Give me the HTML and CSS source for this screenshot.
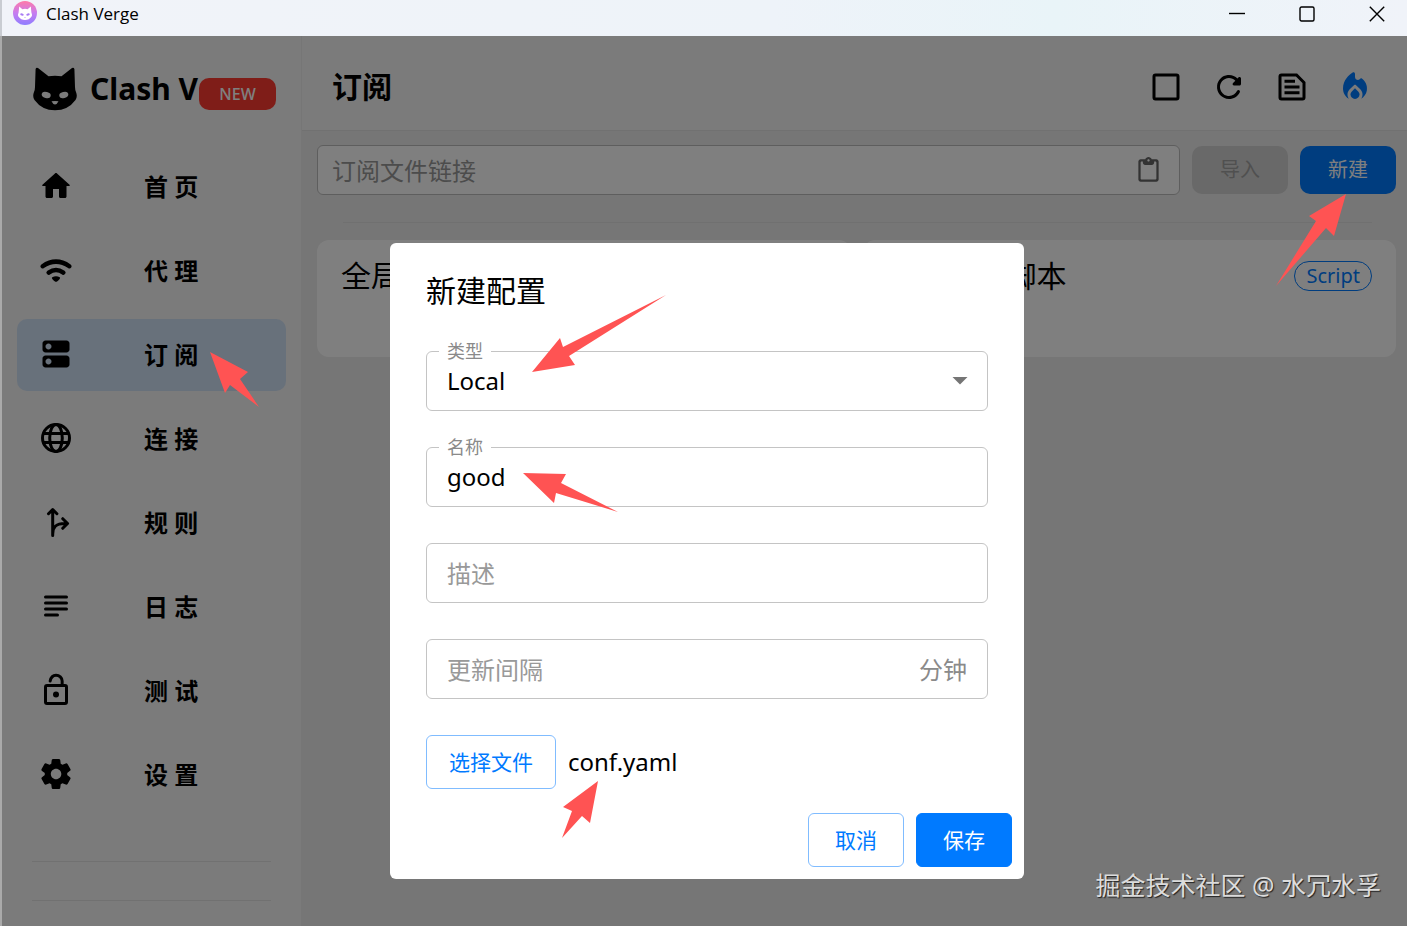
FILE: index.html
```html
<!DOCTYPE html>
<html lang="zh-CN">
<head>
<meta charset="utf-8">
<meta name="viewport" content="width=device-width, initial-scale=1">
<title>Clash Verge</title>
<link rel="stylesheet" href="styles.css">
</head>
<body>
<div class="window">
  <header class="titlebar">
    <svg class="titlebar-logo" viewBox="0 0 24 24" aria-hidden="true">
      <defs><linearGradient id="logo-bg" x1="0" y1="0" x2="0" y2="1"><stop offset="0" stop-color="#ff7aa8"/><stop offset=".5" stop-color="#c77df0"/><stop offset="1" stop-color="#8f7dff"/></linearGradient></defs>
      <circle cx="12" cy="12" r="12" fill="url(#logo-bg)"/>
      <path fill="#fff" d="M6.2 5.4 9.4 8.2Q12 7.4 14.6 8.2L17.8 5.4 18.4 11.5Q19.400 13.500 18.600 15.500Q16 19 12 19Q8 19 5.400 15.500Q4.600 13.500 5.600 11.500Z"/>
      <g fill="#a97cf4"><ellipse cx="9" cy="13.500" rx="1.800" ry="1.100" transform="rotate(18 9 13.500)"/><ellipse cx="15" cy="13.500" rx="1.800" ry="1.100" transform="rotate(-18 15 13.500)"/><path d="M11.200 16.200h1.600l-.8 1z"/></g>
    </svg>
    <span class="titlebar-name">Clash Verge</span>
    <div class="window-controls">
      <button type="button" aria-label="最小化"><svg viewBox="0 0 16 16"><path d="M0 7.500h16"/></svg></button>
      <button type="button" aria-label="最大化"><svg viewBox="0 0 16 16"><rect x="1" y="1" width="14" height="14" rx="1.500"/></svg></button>
      <button type="button" aria-label="关闭"><svg viewBox="0 0 16 16"><path d="M.8.800l14.400 14.400M15.200.800.800 15.200"/></svg></button>
    </div>
  </header>

  <div class="app">
    <aside class="sidebar">
      <div class="brand">
        <svg class="brand-cat" viewBox="0 0 44 44" aria-hidden="true">
          <path d="M2.600 2Q3.300 0 5 1L15.500 9.300Q22 8 28.500 9.300L39 1Q40.700 0 41.400 2L42 20Q42 22.500 43 25Q44.800 29.500 42.500 33Q35 43.300 22 43.300Q9 43.300 1.500 33Q-.8 29.500 1 25Q2 22.500 2 20Z"/>
          <g class="cat-cut"><ellipse cx="13.200" cy="28" rx="4.600" ry="3" transform="rotate(15 13.200 28)"/><ellipse cx="30.800" cy="28" rx="4.600" ry="3" transform="rotate(-15 30.800 28)"/><path d="M18.500 34.300Q22 33.500 25.500 34.300Q24 37.500 22 37.500Q20 37.500 18.500 34.300Z"/></g>
        </svg>
        <span class="brand-name">Clash V</span>
        <span class="brand-badge">NEW</span>
      </div>
      <nav class="menu">
        <a href="#home"><svg viewBox="0 0 24 24"><path d="M10 19v-5h4v5c0 .55.450 1 1 1h3c.55 0 1-.45 1-1v-7h1.700c.46 0 .68-.57.330-.87L12.670 3.600c-.38-.34-.96-.34-1.340 0l-8.360 7.530c-.34.300-.13.870.330.870H5v7c0 .55.450 1 1 1h3c.55 0 1-.45 1-1z"/></svg><span>首 页</span></a>
        <a href="#proxies"><svg viewBox="0 0 24 24"><path class="stroke round wifi" d="M3.100 9.500Q12 3.300 20.900 9.500M7.100 13.700Q12 10.400 16.900 13.700"/><path d="M9.300 17Q12 15.300 14.700 17Q15 18.100 12.700 19.600Q12 20 11.300 19.600Q9 18.100 9.300 17Z"/></svg><span>代 理</span></a>
        <a href="#profiles" class="active" aria-current="page"><svg viewBox="0 0 24 24"><path fill-rule="evenodd" d="M19 13H5c-1.100 0-2 .9-2 2v4c0 1.100.9 2 2 2h14c1.100 0 2-.9 2-2v-4c0-1.100-.9-2-2-2zM7 19c-1.100 0-2-.9-2-2s.9-2 2-2 2 .9 2 2-.9 2-2 2zM19 3H5c-1.100 0-2 .9-2 2v4c0 1.100.9 2 2 2h14c1.100 0 2-.9 2-2V5c0-1.100-.9-2-2-2zM7 9c-1.100 0-2-.9-2-2s.9-2 2-2 2 .9 2 2-.9 2-2 2z"/></svg><span>订 阅</span></a>
        <a href="#connections"><svg viewBox="0 0 24 24"><g class="stroke"><circle cx="12" cy="12" r="9"/><ellipse cx="12" cy="12" rx="4.200" ry="9"/><path d="M3.600 9h16.800M3.600 15h16.800"/></g></svg><span>连 接</span></a>
        <a href="#rules"><svg viewBox="0 0 24 24"><path class="stroke round" d="M9.800 21V4M7 6.500l2.800-2.800 2.800 2.800M9.800 20c0-4.500 2-7 8-7M16.500 9.800l3.200 3.200-3.200 3.200"/></svg><span>规 则</span></a>
        <a href="#logs"><svg viewBox="0 0 24 24"><path class="stroke round" d="M5 6h14M5 10h14M5 14h14M5 18h8"/></svg><span>日 志</span></a>
        <a href="#test"><svg viewBox="0 0 24 24"><rect class="stroke" x="5" y="9" width="14" height="12" rx="1"/><path class="stroke round" d="M8.100 6C8.600 3.500 10 2.100 12 2.100 14.200 2.100 16.100 3.800 16.100 6v3"/><circle cx="12" cy="15" r="2"/></svg><span>测 试</span></a>
        <a href="#settings"><svg viewBox="0 0 24 24"><path d="M19.500 12c0-.23-.01-.45-.03-.68l1.860-1.410c.4-.3.510-.86.260-1.300l-1.870-3.230c-.25-.44-.79-.62-1.250-.42l-2.150.91c-.37-.26-.76-.49-1.170-.68l-.29-2.310c-.06-.5-.49-.88-.99-.88h-3.730c-.51 0-.94.380-1 .88l-.29 2.310c-.41.190-.8.420-1.170.680l-2.150-.91c-.46-.2-1-.02-1.250.420L2.410 8.620c-.25.440-.14.990.260 1.300l1.860 1.410c-.02.220-.03.440-.03.670s.01.450.030.680l-1.860 1.410c-.4.300-.51.860-.26 1.300l1.870 3.230c.25.440.79.620 1.250.420l2.150-.91c.37.260.76.490 1.170.680l.29 2.310c.06.500.490.880.990.880h3.730c.5 0 .93-.38.990-.88l.29-2.310c.41-.19.800-.42 1.170-.68l2.150.91c.46.200 1 .02 1.250-.42l1.870-3.230c.25-.44.140-.99-.26-1.300l-1.860-1.410c.03-.23.040-.45.040-.68zM12.040 15.500c-1.930 0-3.500-1.570-3.500-3.500s1.570-3.500 3.500-3.500 3.500 1.570 3.500 3.500-1.570 3.500-3.500 3.500z"/></svg><span>设 置</span></a>
      </nav>
      <div class="traffic"></div>
    </aside>

    <main class="content">
      <header class="page-header">
        <h1>订阅</h1>
        <div class="page-tools">
          <button type="button" aria-label="批量选择"><svg viewBox="0 0 24 24"><rect class="stroke" x="4" y="4" width="16" height="16" rx="1"/></svg></button>
          <button type="button" aria-label="更新"><svg viewBox="0 0 24 24"><path d="M17.650 6.350c-1.630-1.630-3.940-2.570-6.480-2.310-3.670.370-6.690 3.350-7.100 7.020C3.520 15.910 7.270 20 12 20c3.190 0 5.930-1.870 7.210-4.560.32-.67-.16-1.440-.9-1.440-.37 0-.72.200-.88.530-1.130 2.430-3.840 3.970-6.800 3.310-2.220-.49-4.010-2.300-4.480-4.520C5.310 9.440 8.260 6 12 6c1.660 0 3.140.690 4.220 1.780l-1.510 1.510c-.63.630-.19 1.710.700 1.710H19c.55 0 1-.45 1-1V6.410c0-.89-1.080-1.340-1.710-.71l-.64.650z"/></svg></button>
          <button type="button" aria-label="运行配置"><svg viewBox="0 0 24 24"><path class="stroke" d="M5 4h10l5 5v10q0 1-1 1H5q-1 0-1-1V5q0-1 1-1Z"/><path class="stroke" d="M7 8.200h7M7 12h10M7 15.900h10"/></svg></button>
          <button type="button" class="fire" aria-label="重新激活"><svg viewBox="0 0 24 24"><path d="m12 12.900-2.130 2.090C9.310 15.550 9 16.280 9 17.060 9 18.680 10.350 20 12 20s3-1.320 3-2.940c0-.78-.31-1.520-.87-2.070L12 12.900z"/><path d="m16 6-.44.550C14.380 8.020 12 7.190 12 5.300V3.250c0-.8-.89-1.280-1.550-.84C8.120 3.970 4 7.460 4 13c0 2.920 1.560 5.470 3.890 6.860-.56-.79-.89-1.760-.89-2.800 0-1.320.520-2.560 1.470-3.500l2.830-2.780c.39-.38 1.010-.38 1.400 0l2.830 2.780C16.480 14.490 17 15.740 17 17.060c0 1.020-.31 1.960-.85 2.750 1.890-1.150 3.290-3.060 3.710-5.300.66-3.550-1.070-6.900-3.860-8.510z"/></svg></button>
        </div>
      </header>
      <section class="import-bar">
        <div class="url-box">
          <input type="text" aria-label="订阅文件链接" placeholder="订阅文件链接">
          <button type="button" aria-label="粘贴"><svg viewBox="0 0 24 24"><path fill-rule="evenodd" d="M19 2h-4.180C14.400.840 13.300 0 12 0S9.600.840 9.180 2H5c-1.100 0-2 .9-2 2v16c0 1.100.9 2 2 2h14c1.100 0 2-.9 2-2V4c0-1.100-.9-2-2-2zm-7 0c.55 0 1 .45 1 1s-.45 1-1 1-1-.45-1-1 .45-1 1-1zm6 18H6c-.55 0-1-.45-1-1V5c0-.55.450-1 1-1h1v1c0 1.100.9 2 2 2h6c1.100 0 2-.9 2-2V4h1c.55 0 1 .45 1 1v14c0 .55-.45 1-1 1z"/></svg></button>
        </div>
        <button type="button" class="btn-import" disabled>导入</button>
        <button type="button" class="btn-new">新建</button>
      </section>
      <hr class="divider">
      <section class="cards">
        <article class="card"><h2>全局</h2></article>
        <article class="card"><h2>全局扩展脚本</h2><span class="chip">Script</span></article>
      </section>
    </main>

    <div class="backdrop">
      <form class="dialog" role="dialog" aria-labelledby="dialog-title">
        <h2 class="dialog-title" id="dialog-title">新建配置</h2>
        <div class="field">
          <label for="type">类型</label>
          <select id="type"><option>Local</option><option>Remote</option></select>
          <svg class="caret" viewBox="0 0 16 8" aria-hidden="true"><path d="M.5 0h15L8 7.500z"/></svg>
        </div>
        <div class="field">
          <label for="name">名称</label>
          <input id="name" type="text" value="good">
        </div>
        <div class="field"><input type="text" aria-label="描述" placeholder="描述"></div>
        <div class="field"><input type="text" aria-label="更新间隔" placeholder="更新间隔"><span class="unit">分钟</span></div>
        <div class="file-row"><button type="button" class="btn-outline">选择文件</button><span>conf.yaml</span></div>
        <div class="actions"><button type="button" class="btn-outline">取消</button><button type="submit" class="btn-save">保存</button></div>
      </form>
    </div>
  </div>

  <svg class="arrows" width="1407" height="926" viewBox="0 0 1407 926" aria-hidden="true">
    <path d="M210 352 248 372 240 379 259 407 230 385 225 393Z"/>
    <path d="M1346 194 1334 236 1326 228 1276 286 1316 221 1309 216Z"/>
    <path d="M532 372 560 338 563 347 666 295 569 356 575 365Z"/>
    <path d="M523 473 566 474 561 483 618 512 556 493 554 503Z"/>
    <path d="M598 781 590 823 582 816 562 838 572 811 563 807Z"/>
  </svg>
  <p class="watermark">掘金技术社区 @ 水冗水孚</p>
</div>
</body>
</html>
```
FILE: styles.css
```css
* { box-sizing: border-box; }

body {
  margin: 0;
  font-family: "Noto Sans", "Noto Sans CJK SC", sans-serif;
  color: #000;
}

h1, h2, p { margin: 0; font-weight: 400; }

button, input, select { font: inherit; color: inherit; margin: 0; }

button {
  display: flex;
  align-items: center;
  justify-content: center;
  padding: 0;
  border: 0;
  background: none;
}

svg { display: block; }

.window {
  position: relative;
  display: flex;
  flex-direction: column;
  height: 100vh;
  overflow: hidden;
}

.titlebar {
  display: flex;
  align-items: flex-start;
  flex: none;
  height: 36px;
  padding-left: 11px;
  border-left: 2px solid #c9ccd2;
  background: linear-gradient(90deg, #f1f3f9, #eef3f9 55%, #e9f4f8 75%, #f0f3f9);
}

.titlebar-logo { width: 24px; height: 24px; margin-top: 1px; }

.titlebar-name {
  flex: 1;
  margin-left: 9px;
  font-family: "Open Sans", sans-serif;
  font-size: 17px;
  line-height: 28px;
}

.window-controls { display: flex; gap: 10px; }
.window-controls button { width: 60px; height: 28px; }
.window-controls svg { width: 16px; height: 16px; fill: none; stroke: #000; stroke-width: 1.400; }

.app {
  position: relative;
  display: flex;
  flex: 1;
  min-height: 0;
  border-left: 2px solid #aaa;
}

.stroke { fill: none; stroke: currentColor; stroke-width: 2; }
.round { stroke-linecap: round; stroke-linejoin: round; }
.wifi { stroke-width: 3; }

.sidebar {
  display: flex;
  flex-direction: column;
  flex: none;
  width: 300px;
  border-right: 1px solid #ececec;
  background: #f6f6f6;
}

.brand {
  display: flex;
  align-items: center;
  height: 103px;
  padding: 2px 0 0 31px;
}

.brand-cat { width: 44px; height: 44px; }
.cat-cut { fill: #f6f6f6; }
.brand-name { margin-left: 13px; font-size: 30px; font-weight: 700; line-height: 40px; white-space: nowrap; }

.brand-badge {
  width: 77px;
  margin: 10px 0 0 1px;
  border-radius: 10px;
  background: #ff3b30;
  color: #fff;
  font-size: 16px;
  font-weight: 500;
  line-height: 32px;
  text-align: center;
}

.menu {
  display: flex;
  flex-direction: column;
  gap: 12px;
  padding: 12px 15px;
}

.menu a {
  display: flex;
  align-items: center;
  height: 72px;
  padding: 0 0 2px 21px;
  border-radius: 10px;
  color: #000;
  font-size: 24px;
  font-weight: 700;
  text-decoration: none;
}

.menu svg, .page-tools svg { width: 36px; height: 36px; fill: currentColor; }
.menu .stroke, .page-tools .stroke { fill: none; }
.menu span { flex: 1; margin-left: 70px; padding-bottom: 2px; }
.menu .active { background: #d0e2f6; }

.traffic {
  height: 40px;
  margin: 38px 30px 0;
  border: solid #e2e2e2;
  border-width: 1px 0;
}

.content { flex: 1; min-width: 0; background: #ececec; }

.page-header {
  display: flex;
  align-items: center;
  justify-content: space-between;
  height: 95px;
  padding: 8px 34px 0 30px;
  border-bottom: 1px solid #e2e2e2;
  background: #f6f6f6;
}

.page-header h1 { font-size: 30px; font-weight: 700; line-height: 44px; }
.page-tools { display: flex; gap: 27px; }
.page-tools .fire { color: #007aff; }

.import-bar {
  display: flex;
  align-items: center;
  gap: 12px;
  padding: 14px 11px 0 15px;
}

.url-box {
  display: flex;
  align-items: center;
  flex: 1;
  height: 50px;
  padding: 0 17px 0 14px;
  border: 1px solid #bdbdbd;
  border-radius: 6px;
  background: #fff;
}

.url-box input {
  flex: 1;
  min-width: 0;
  padding: 0;
  border: 0;
  outline: 0;
  background: none;
  font-size: 24px;
}

.url-box svg { width: 27px; height: 27px; fill: #666; }

.url-box input::placeholder { color: #999; opacity: 1; }

.btn-import, .btn-new {
  width: 96px;
  height: 48px;
  padding-bottom: 4px;
  border-radius: 10px;
  font-size: 20px;
}

.btn-import { background: #d2d2d2; color: #a0a0a0; }
.btn-new { background: #007aff; color: #fff; }

.divider {
  margin: 27px 35px 0 41px;
  border: 0;
  border-top: 1px solid #e0e0e0;
}

.cards {
  display: grid;
  grid-template-columns: 1fr 1fr;
  gap: 12px;
  padding: 17px 11px 0 15px;
}

.card {
  display: flex;
  align-items: flex-start;
  justify-content: space-between;
  height: 117px;
  padding: 14px 24px;
  border-radius: 12px;
  background: #fff;
}

.card h2 { font-size: 30px; line-height: 44px; }

.chip {
  margin-top: 7px;
  padding: 0 11px;
  border: 1px solid #007aff;
  border-radius: 15px;
  color: #007aff;
  font-size: 20px;
  line-height: 28px;
}

.backdrop {
  position: absolute;
  inset: 0;
  display: flex;
  align-items: flex-start;
  justify-content: center;
  padding: 207px 0 0 5px;
  background: rgba(0, 0, 0, .5);
}

.dialog {
  display: flex;
  flex-direction: column;
  gap: 36px;
  width: 634px;
  max-width: 90%;
  padding: 24px 36px 12px;
  border-radius: 6px;
  background: #fff;
}

.dialog-title { font-size: 30px; line-height: 48px; }

.field {
  position: relative;
  display: flex;
  align-items: center;
  height: 60px;
  border: 1px solid #c4c4c4;
  border-radius: 6px;
  font-size: 24px;
}

.field label {
  position: absolute;
  top: -14px;
  left: 12px;
  padding: 0 8px;
  background: #fff;
  color: #8a8a8a;
  font-size: 18px;
  line-height: 26px;
}

.field input, .field select {
  flex: 1;
  min-width: 0;
  height: 58px;
  padding: 0 20px;
  border: 0;
  outline: 0;
  appearance: none;
  background: none;
}

.field label + input, .field label + select { padding-bottom: 2px; }

.field input::placeholder { color: #999; opacity: 1; }
.unit { padding: 0 20px 2px 0; color: #8a8a8a; }

.caret {
  position: absolute;
  right: 19px;
  width: 16px;
  height: 8px;
  fill: #757575;
}

.file-row { display: flex; align-items: center; gap: 12px; font-size: 24px; }
.file-row span { padding-bottom: 2px; }

.actions {
  display: flex;
  justify-content: flex-end;
  gap: 12px;
  margin: -12px -24px 0 0;
}

.btn-outline, .btn-save {
  min-width: 96px;
  height: 54px;
  padding: 0 22px 3px;
  border: 1px solid #80bcff;
  border-radius: 6px;
  color: #007aff;
  font-size: 21px;
}

.btn-save { border-color: #007aff; background: #007aff; color: #fff; }

.arrows {
  position: absolute;
  top: 0;
  left: 0;
  fill: #ff5353;
  pointer-events: none;
}

.watermark {
  position: absolute;
  right: 26px;
  bottom: 23px;
  color: #dcdcdc;
  font-size: 25px;
  line-height: 36px;
  text-shadow: 1px 1px 1px #222;
}
```
